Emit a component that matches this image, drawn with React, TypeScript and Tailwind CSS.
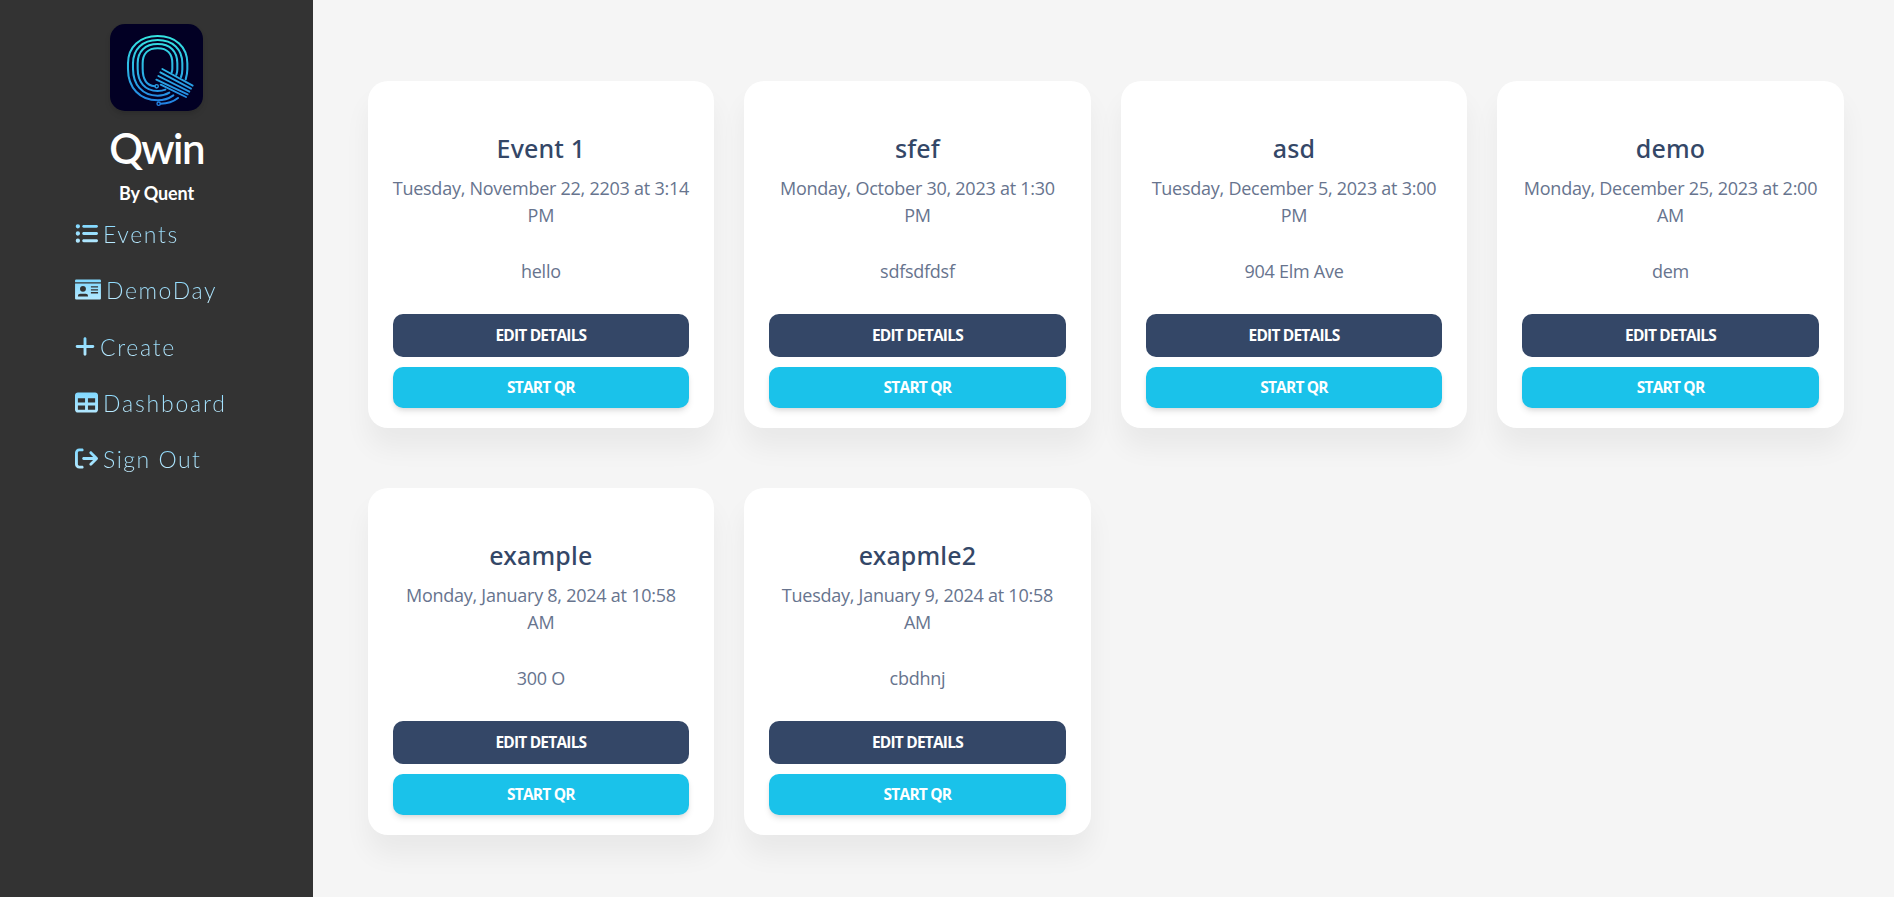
import type { ComponentType } from "react";
import {
  FaArrowRightFromBracket,
  FaListUl,
  FaPlus,
  FaTable,
} from "react-icons/fa6";

interface EventItem {
  title: string;
  date: string;
  place: string;
}

const events: EventItem[] = [
  { title: "Event 1", date: "Tuesday, November 22, 2203 at 3:14 PM", place: "hello" },
  { title: "sfef", date: "Monday, October 30, 2023 at 1:30 PM", place: "sdfsdfdsf" },
  { title: "asd", date: "Tuesday, December 5, 2023 at 3:00 PM", place: "904 Elm Ave" },
  { title: "demo", date: "Monday, December 25, 2023 at 2:00 AM", place: "dem" },
  { title: "example", date: "Monday, January 8, 2024 at 10:58 AM", place: "300 O" },
  { title: "exapmle2", date: "Tuesday, January 9, 2024 at 10:58 AM", place: "cbdhnj" },
];

function IdCard({ className }: { className?: string }) {
  return (
    <svg viewBox="0 0 576 512" className={className}>
      <path
        fillRule="evenodd"
        d="M24 32H552Q576 32 576 56V92H0V56Q0 32 24 32ZM0 124H576V456Q576 480 552 480H24Q0 480 0 456ZM176 176a66 66 0 1 0 0 132a66 66 0 1 0 0-132ZM64 412H288V396Q288 348 236 348H116Q64 348 64 396ZM352 182V212H512V182ZM352 248V278H512V248ZM352 314V344H512V314Z"
      />
    </svg>
  );
}

interface NavLink {
  label: string;
  Icon: ComponentType<{ className?: string }>;
  size: string;
  spacing: string;
}

const links: NavLink[] = [
  { label: "Events", Icon: FaListUl, size: "w-[23px]", spacing: "tracking-[1.65px]" },
  { label: "DemoDay", Icon: IdCard, size: "w-[26px]", spacing: "tracking-[1.6px]" },
  { label: "Create", Icon: FaPlus, size: "w-[20px]", spacing: "tracking-[1.7px]" },
  { label: "Dashboard", Icon: FaTable, size: "w-[23px]", spacing: "tracking-[1.8px]" },
  { label: "Sign Out", Icon: FaArrowRightFromBracket, size: "w-[23px]", spacing: "tracking-[1.5px]" },
];

function Logo() {
  return (
    <svg
      viewBox="60 42 279 261"
      className="h-[87px] w-[93px] rounded-[15px] bg-[#020024] shadow-[0_4px_7px_-1px_rgba(0,0,0,0.11),0_2px_4px_-1px_rgba(0,0,0,0.07)]"
      fill="none"
      strokeWidth="6.2"
      strokeLinecap="round"
    >
      <defs>
        <linearGradient id="logo-stroke" gradientUnits="userSpaceOnUse" x1="0" y1="75" x2="0" y2="285">
          <stop offset="0" stopColor="#35e6e0" />
          <stop offset="0.5" stopColor="#2cb4e4" />
          <stop offset="1" stopColor="#2280e4" />
        </linearGradient>
      </defs>
      <g stroke="url(#logo-stroke)">
        <path d="M250 256C236 266 220 271 203 271C150 271 114 234 114 178V160C114 110 150 78 203 78C256 78 292 110 292 160V178C292 190 290 198 287 208" />
        <path d="M238 248C228 254 216 257 203 257C157 257 129 224 129 176V160C129 118 157 90 203 90C249 90 277 118 277 160V178C277 187 276 194 273 201" />
        <path d="M226 239C219 242 212 243 203 243C165 243 143 216 143 176V160C143 124 165 102 203 102C241 102 262 124 262 160V178C262 184 261 189 259 194" />
        <path d="M194 229C170 226 158 206 158 176V160C158 132 174 115 203 115C232 115 247 132 247 160V176C247 181 246 184 245 187" />
        <path d="M212 281C232 281 250 275 264 264" />
        <circle cx="200" cy="229" r="5" strokeWidth="4" />
        <circle cx="206" cy="281" r="5" strokeWidth="4" />
        <path
          strokeWidth="5.6"
          d="M217 177L308 227M211 187L303 236M205 198L298 245M199 209L293 253M212 224L288 261"
        />
      </g>
    </svg>
  );
}

function Sidebar() {
  return (
    <aside className="flex w-[313px] shrink-0 flex-col items-center bg-[#333333] pt-6">
      <Logo />
      <h1 className="mt-3 h-[50px] text-[42px] leading-[50px] font-semibold tracking-[-1.6px] text-white">
        Qwin
      </h1>
      <h2 className="mt-[7px] h-[26px] text-[18px] leading-[26px] font-bold tracking-[-0.1px] text-white">
        By Quent
      </h2>
      <svg className="h-0 w-full" aria-hidden="true">
        <defs>
          <linearGradient id="nav-fill" x1="0" y1="0" x2="0" y2="1">
            <stop offset="0" stopColor="#80d8ff" />
            <stop offset="1" stopColor="#b3e8ff" />
          </linearGradient>
        </defs>
      </svg>
      <nav className="mt-1 flex w-full flex-col pl-[75px]">
        {links.map(({ label, Icon, size, spacing }) => (
          <a key={label} className="flex h-[56.25px] items-start gap-[5px] pt-[10px]">
            <Icon className={`mt-[2px] h-[23px] shrink-0 fill-[url(#nav-fill)] ${size}`} />
            <span
              className={`bg-linear-to-b from-[#80d8ff] to-[#c4edff] bg-clip-text text-[23px] leading-[28px] font-light text-transparent ${spacing}`}
            >
              {label}
            </span>
          </a>
        ))}
      </nav>
    </aside>
  );
}

function EventCard({ title, date, place }: EventItem) {
  return (
    <article className="flex h-[347px] flex-col rounded-[20px] bg-white px-[25px] pt-12 text-center font-['Open_Sans',sans-serif] shadow-[0_20px_27px_rgba(0,0,0,0.05)]">
      <h3 className="font-['Noto_Sans','Open_Sans',sans-serif] text-[25px] leading-[38px] font-medium tracking-[0.15px] text-[#344767]">
        {title}
      </h3>
      <p className="-mx-px mt-2 text-[18px] leading-[27px] font-normal tracking-[-0.25px] text-[#67748e]">{date}</p>
      <p className="mt-[29px] text-[18px] leading-[27px] font-normal tracking-[-0.25px] text-[#67748e]">{place}</p>
      <button className="mt-[29px] h-[43px] shrink-0 rounded-[10px] bg-[#344767] text-[15.5px] font-bold tracking-[-0.8px] text-white">
        EDIT DETAILS
      </button>
      <button className="mt-[10px] h-[41px] shrink-0 rounded-[10px] bg-[#1ac2ea] text-[15.5px] font-bold tracking-[-0.8px] text-white shadow-[0_4px_7px_-1px_rgba(0,0,0,0.11),0_2px_4px_-1px_rgba(0,0,0,0.07)]">
        START QR
      </button>
    </article>
  );
}

export default function App() {
  return (
    <div className="flex h-[897px] w-full overflow-hidden bg-[#f5f5f5] font-[Lato,sans-serif]">
      <Sidebar />
      <main className="grid flex-1 grid-cols-4 content-start gap-x-[30px] gap-y-[60px] pt-[81px] pr-[50.2px] pl-[54.6px]">
        {events.map((event) => (
          <EventCard key={event.title} {...event} />
        ))}
      </main>
    </div>
  );
}
